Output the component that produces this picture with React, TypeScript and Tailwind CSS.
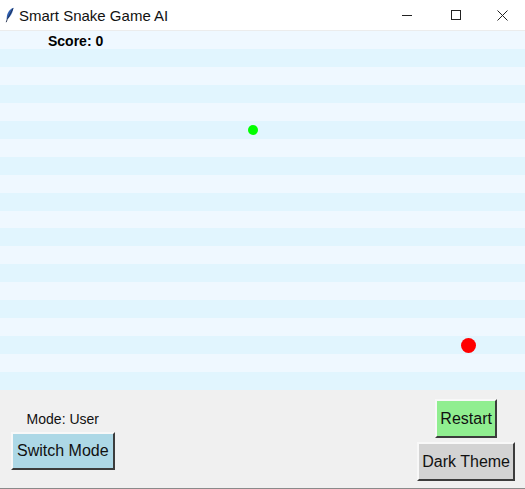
import React from 'react';

const stripes = Array.from({ length: 20 }, (_, i) => i);

const raised =
  'border-2 border-t-[#f8f8f8] border-l-[#f8f8f8] border-r-[#3c3c3c] border-b-[#3c3c3c]';

const Feather = () => (
  <svg width="10" height="16" viewBox="0 0 10 16" aria-hidden>
    <path d="M8.5 0.8 C5 2 2.2 5.5 1.8 10 L1.6 12.5 C4.5 11 7.5 7 8.5 0.8 Z" fill="#2f5fb0" />
    <path d="M8 1.5 L2.2 12.5 L1.2 15.2" stroke="#1d2a4a" strokeWidth="0.9" fill="none" />
  </svg>
);

export default function App() {
  return (
    <div className="w-[525px] h-[489px] flex flex-col bg-[#f0f0f0] border-b border-[#8a8a8a] font-['Liberation_Sans',Arial,sans-serif] text-black overflow-hidden">
      <header className="h-[30px] shrink-0 bg-white flex items-center">
        <div className="w-[19px] flex justify-center pl-[1px]">
          <Feather />
        </div>
        <span className="text-[15px] leading-none text-[#111]">Smart Snake Game AI</span>
        <div className="ml-auto flex items-center h-full">
          <div className="w-[46px] h-full flex items-center justify-center">
            <span className="block w-[10px] h-px bg-[#222]" />
          </div>
          <div className="w-[46px] h-full flex items-center justify-center ml-[3px]">
            <span className="block w-[10px] h-[10px] border border-[#222]" />
          </div>
          <div className="w-[46px] h-full flex items-center justify-center">
            <svg width="11" height="11" viewBox="0 0 11 11" aria-hidden>
              <path d="M0.5 0.5 L10.5 10.5 M10.5 0.5 L0.5 10.5" stroke="#222" strokeWidth="1" />
            </svg>
          </div>
        </div>
      </header>

      <section className="relative h-[360px] shrink-0 border-t border-[#ececec]">
        <div className="flex flex-col h-full">
          {stripes.map((i) => (
            <div
              key={i}
              className={`flex-1 ${i % 2 === 0 ? 'bg-[#eff8ff]' : 'bg-[#e1f5fe]'}`}
            />
          ))}
        </div>
        <span className="absolute left-[48px] top-[2px] text-[14px] font-bold leading-[16px]">
          Score: 0
        </span>
        <span className="absolute left-[248px] top-[94px] w-[10px] h-[10px] rounded-full bg-[#00ff00]" />
        <span className="absolute left-[461px] top-[307px] w-[15px] h-[15px] rounded-full bg-[#ff0000]" />
      </section>

      <footer className="flex-1 flex justify-between pl-[11px] pr-[10px]">
        <div className="flex flex-col items-center pt-[21px] gap-[5px]">
          <span className="text-[14px] leading-[16px] text-[#111]">Mode: User</span>
          <button className={`h-[38px] px-[4px] bg-[#add8e6] text-[16px] text-[#111] ${raised}`}>
            Switch Mode
          </button>
        </div>
        <div className="flex flex-col items-center pt-[9px] gap-[4px]">
          <button className={`h-[39px] px-[3px] bg-[#90ee90] text-[16px] text-[#111] ${raised}`}>
            Restart
          </button>
          <button className={`h-[39px] px-[3px] bg-[#d3d3d3] text-[16px] text-[#111] ${raised}`}>
            Dark Theme
          </button>
        </div>
      </footer>
    </div>
  );
}
